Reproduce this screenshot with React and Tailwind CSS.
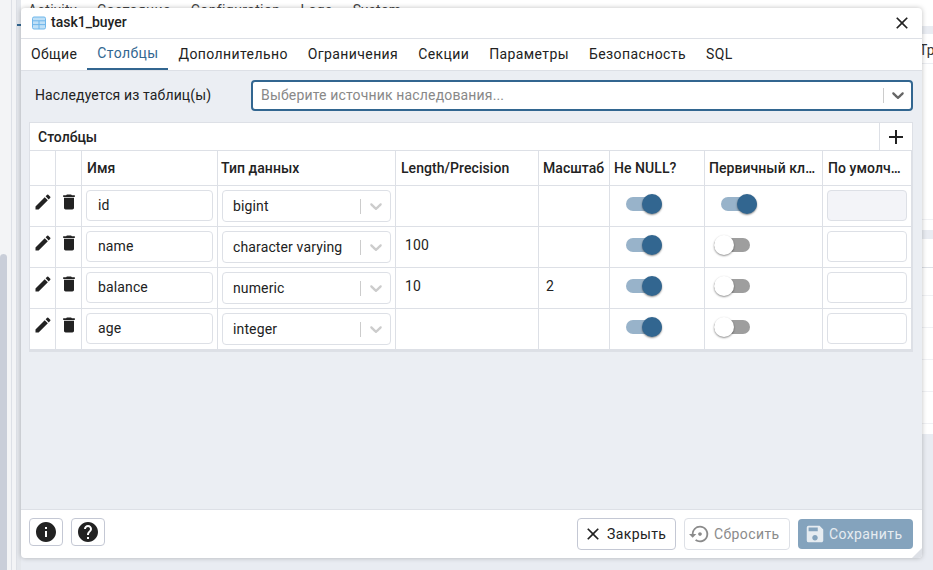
import React from "react";
import {
  MdAdd,
  MdClose,
  MdDelete,
  MdEdit,
  MdHelp,
  MdInfo,
  MdSave,
  MdSettingsBackupRestore,
} from "react-icons/md";

const tabs = ["Общие", "Столбцы", "Дополнительно", "Ограничения", "Секции", "Параметры", "Безопасность", "SQL"];

const rows = [
  { name: "id", type: "bigint", length: "", scale: "", pk: true, locked: true },
  { name: "name", type: "character varying", length: "100", scale: "", pk: false },
  { name: "balance", type: "numeric", length: "10", scale: "2", pk: false },
  { name: "age", type: "integer", length: "", scale: "", pk: false },
];

const GRID = "grid grid-cols-[26px_26px_136px_178px_143px_71px_95px_118px_89px]";
const CELL = "border-r border-b border-[#dde0e6] min-w-0";

function Chevron({ color }) {
  return (
    <svg width="20" height="20" viewBox="0 0 20 20" fill={color}>
      <path d="M4.516 7.548c0.436-0.446 1.043-0.481 1.576 0l3.908 3.747 3.908-3.747c0.533-0.481 1.141-0.446 1.574 0 0.436 0.445 0.408 1.197 0 1.615-0.406 0.418-4.695 4.502-4.695 4.502-0.217 0.223-0.502 0.335-0.787 0.335s-0.57-0.112-0.789-0.335c0 0-4.287-4.084-4.695-4.502s-0.436-1.17 0-1.615z" />
    </svg>
  );
}

function TableIcon() {
  return (
    <svg width="14" height="14" viewBox="0 0 14 14">
      <rect x="0.5" y="1" width="13" height="12" rx="1.5" fill="#bfe0f7" stroke="#6fb6ea" />
      <path d="M1 4.8H13M1 8.6H13M7 4.8V13" stroke="#6fb6ea" strokeWidth="1" />
    </svg>
  );
}

function Toggle({ on }) {
  return (
    <span className="relative block h-5 w-9">
      <span className={"absolute left-0 right-0 top-[3px] h-[14px] rounded-full " + (on ? "bg-[#98b3ca]" : "bg-[#9e9e9e]")} />
      <span
        className={
          "absolute top-0 h-5 w-5 rounded-full shadow-[0_1px_2px_rgba(0,0,0,0.45)] " +
          (on ? "right-0 bg-[#326690]" : "left-0 bg-white")
        }
      />
    </span>
  );
}

function Row({ row }) {
  return (
    <div className={GRID + " h-[41px]"}>
      <div className={CELL + " flex justify-center pt-[6px]"}>
        <MdEdit size={20} color="#222222" />
      </div>
      <div className={CELL + " flex justify-center pt-[6px]"}>
        <MdDelete size={20} color="#222222" />
      </div>
      <div className={CELL + " pl-1 pr-1 pt-[4px]"}>
        <div className="flex h-[31px] items-center rounded border border-[#dde0e6] bg-white pl-[11px]">{row.name}</div>
      </div>
      <div className={CELL + " pl-1 pr-1 pt-[4px]"}>
        <div className="flex h-[32px] items-center rounded border border-[#dde0e6] bg-white pl-[10px]">
          <span className="flex-1">{row.type}</span>
          <span className="h-[15px] w-px bg-[#cccccc]" />
          <span className="flex w-[29px] justify-center">
            <Chevron color="#cccccc" />
          </span>
        </div>
      </div>
      <div className={CELL + " pl-[9px] pt-[8px]"}>{row.length}</div>
      <div className={CELL + " pl-[7px] pt-[8px]"}>{row.scale}</div>
      <div className={CELL + " pl-4 pt-2"}>
        <Toggle on />
      </div>
      <div className={CELL + " pt-2 " + (row.pk ? "pl-4" : "pl-[9px]")}>
        <Toggle on={row.pk} />
      </div>
      <div className={CELL + " pl-1 pr-1 pt-[4px]"}>
        <div className={"h-[31px] rounded border border-[#dde0e6] " + (row.locked ? "bg-[#f3f4f8]" : "bg-white")} />
      </div>
    </div>
  );
}

function Backdrop() {
  return (
    <div className="flex h-[570px] w-[933px] overflow-hidden bg-white">
      {/* left tree panel with its scrollbar */}
      <div className="flex w-[11px] flex-col bg-[#f3f4f6]">
        <div className="h-[254px]" />
        <div className="w-[7px] flex-1 rounded-t-sm bg-[#c9ced9]" />
      </div>
      <div className="w-[6px] border-x border-[#dde0e6] bg-[#f3f4f6]" />
      <div className="w-[4px] bg-[#e4e7ec] pt-[24px]">
        <div className="h-[2px] bg-[#326690]" />
      </div>
      <div className="flex-1">
        <div className="flex h-[26px] gap-[20px] overflow-hidden pl-[7px] text-[14px] leading-[20px] tracking-[0.4px] text-[#444444]">
          <span>Activity</span>
          <span>Состояние</span>
          <span>Configuration</span>
          <span>Logs</span>
          <span>System</span>
        </div>
        <div className="h-[8px] bg-[#e9ecf2]" />
        <div className="flex h-[30px] justify-end border-b border-[#eceef2] text-[14px] leading-[32px] text-[#333333]">
          <span className="w-[14px] overflow-hidden">Тр</span>
        </div>
        <div className="h-[156px] border-b border-[#f0f1f4]" />
        <div className="h-[10px]" />
        <div className="h-[9px] bg-[#e9ecf2]" />
        <div className="h-[29px] border-b border-[#dde0e6]" />
        <div className="h-[28px] border-b border-[#f0f1f4]" />
        <div className="h-[32px] border-b border-[#f0f1f4]" />
        <div className="h-[32px] border-b border-[#f0f1f4]" />
        <div className="h-[32px] border-b border-[#f0f1f4]" />
        <div className="h-[32px] border-b border-[#f0f1f4]" />
        <div className="h-[10px]" />
        <div className="h-[136px] bg-[#e9ecf2]" />
      </div>
    </div>
  );
}

export default function App() {
  return (
    <div className="relative h-[570px] w-[933px] overflow-hidden font-['Roboto',sans-serif] text-[14px] tracking-[0.13px] text-[#222222]">
      <Backdrop />

      {/* dialog window */}
      <div className="absolute left-[21px] top-[8px] flex h-[550px] w-[901px] flex-col overflow-hidden rounded bg-white shadow-[0_0_5px_rgba(0,0,0,0.25)]">
        <div className="flex h-[31px] items-center gap-[5px] border-b border-[#dde0e6] pl-[11px] pr-[10px]">
          <TableIcon />
          <span className="flex-1 pb-[2px] font-medium leading-[28px] tracking-normal">task1_buyer</span>
          <MdClose size={20} />
        </div>

        <div className="flex h-[32px] border-b border-[#dde0e6] pt-[1px]">
          {tabs.map((tab) => (
            <div
              key={tab}
              className={
                "flex h-[30px] items-center px-[10px] pb-[2px] tracking-[0.4px] " +
                (tab === "Столбцы" ? "border-b-2 border-[#326690] pb-0 text-[#326690]" : "")
              }
            >
              {tab}
            </div>
          ))}
        </div>

        <div className="flex flex-1 flex-col bg-[#ebeef3] pl-2 pr-[9px]">
          <div className="mt-[9px] flex h-[30px] items-center">
            <span className="w-[222px] pl-[6px]">Наследуется из таблиц(ы)</span>
            <div className="flex h-[31px] flex-1 items-center rounded border-2 border-[#326690] bg-white pl-[8px]">
              <span className="flex-1 tracking-[0.16px] text-[#888888]">Выберите источник наследования...</span>
              <span className="h-[15px] w-px bg-[#cccccc]" />
              <span className="flex w-[27px] justify-center">
                <Chevron color="#666666" />
              </span>
            </div>
          </div>

          <div className="mt-[12px] w-[884px] border-r border-b-2 border-[#dde0e6] bg-white">
            <div className="flex h-[29px] border-y border-l border-[#dde0e6]">
              <span className="flex-1 pl-2 font-medium leading-[28px] tracking-normal">Столбцы</span>
              <span className="flex w-[33px] items-center justify-center border-l border-[#dde0e6]">
                <MdAdd size={24} color="#222222" />
              </span>
            </div>
            <div className="border-l border-[#dde0e6]">
              <div className={GRID + " h-[35px] font-medium leading-[34px] tracking-[0.06px]"}>
                <div className={CELL} />
                <div className={CELL} />
                <div className={CELL + " pl-[5px]"}>Имя</div>
                <div className={CELL + " pl-[3px]"}>Тип данных</div>
                <div className={CELL + " pl-[5px]"}>Length/Precision</div>
                <div className={CELL + " pl-[4px]"}>Масштаб</div>
                <div className={CELL + " pl-[4px]"}>Не NULL?</div>
                <div className={CELL + " pl-[4px]"}>Первичный кл…</div>
                <div className={CELL + " pl-[5px]"}>По умолч…</div>
              </div>
              {rows.map((row) => (
                <Row key={row.name} row={row} />
              ))}
            </div>
          </div>
        </div>

        <div className="relative flex h-[49px] items-start border-t border-[#dde0e6] pl-2 pr-[9px] pt-2">
          <button className="flex h-[28px] w-[34px] items-center justify-center rounded border border-[#c4c8d4] bg-white">
            <MdInfo size={24} color="#222222" />
          </button>
          <button className="ml-2 flex h-[28px] w-[34px] items-center justify-center rounded border border-[#c4c8d4] bg-white">
            <MdHelp size={24} color="#222222" />
          </button>
          <button className="ml-auto flex h-[32px] w-[99px] items-center gap-[4px] rounded border border-[#c4c8d4] bg-white pl-[5px] tracking-[0.4px]">
            <MdClose size={20} color="#222222" />
            <span>Закрыть</span>
          </button>
          <button className="ml-2 flex h-[32px] w-[106px] items-center gap-[3px] rounded border border-[#dde0e6] bg-white pl-[4px] tracking-[0.4px] text-[#8b8b8b]">
            <MdSettingsBackupRestore size={22} color="#8b8b8b" />
            <span>Сбросить</span>
          </button>
          <button className="ml-2 mt-px flex h-[30px] w-[115px] items-center gap-[3px] rounded bg-[#84a3bd] pl-[6px] tracking-[0.4px] text-[#e6ecf1]">
            <MdSave size={22} color="#e6ecf1" />
            <span>Сохранить</span>
          </button>
          {/* resize grip */}
          <span className="absolute bottom-0 right-0 h-0 w-0 border-b-[10px] border-l-[10px] border-b-[#dde0e6] border-l-transparent" />
        </div>
      </div>
    </div>
  );
}
